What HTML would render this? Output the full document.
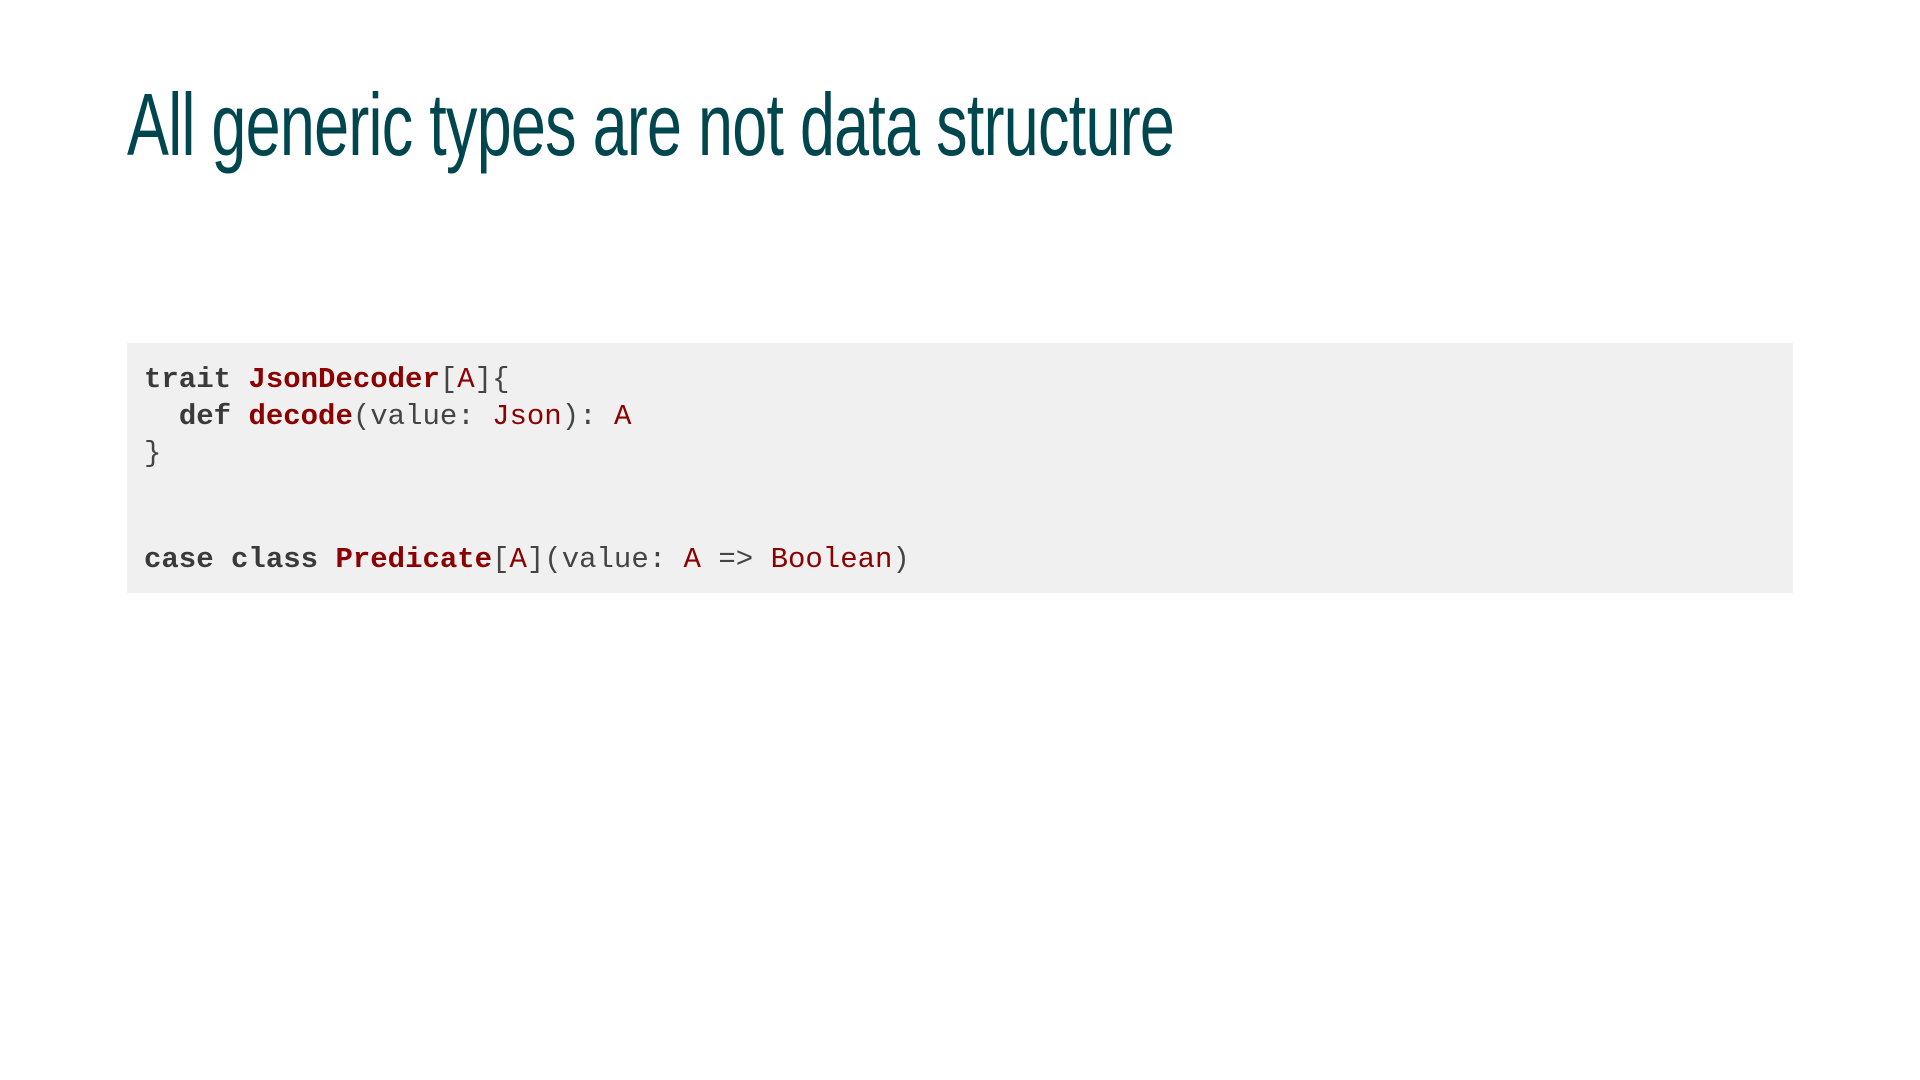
<!DOCTYPE html>
<html><head><meta charset="utf-8"><style>
html,body{margin:0;padding:0;background:#fff;width:1920px;height:1080px;overflow:hidden}
.t{position:absolute;left:127px;top:74px;font-family:"Liberation Sans Narrow","Liberation Sans",sans-serif;font-size:88px;color:#00464f;white-space:nowrap;transform:scaleX(0.714);transform-origin:left top;letter-spacing:-1px}
.box{position:absolute;left:127px;top:343px;width:1666px;height:250px;background:#f0f0f0}
.l{position:absolute;left:144px;font-family:"Liberation Mono",monospace;font-size:29px;color:#444;white-space:pre;line-height:1}
b{color:#3a3a3a}
.r{color:#8b0000}
b.r{color:#8b0000}
</style></head><body>
<div class="t">All generic types are not data structure</div>
<div class="box"></div>
<div class="l" style="top:365px"><b>trait</b> <b class="r">JsonDecoder</b>[<span class="r">A</span>]{</div>
<div class="l" style="top:402px">  <b>def</b> <b class="r">decode</b>(value: <span class="r">Json</span>): <span class="r">A</span></div>
<div class="l" style="top:439px">}</div>
<div class="l" style="top:545px"><b>case</b> <b>class</b> <b class="r">Predicate</b>[<span class="r">A</span>](value: <span class="r">A</span> =&gt; <span class="r">Boolean</span>)</div>
</body></html>
